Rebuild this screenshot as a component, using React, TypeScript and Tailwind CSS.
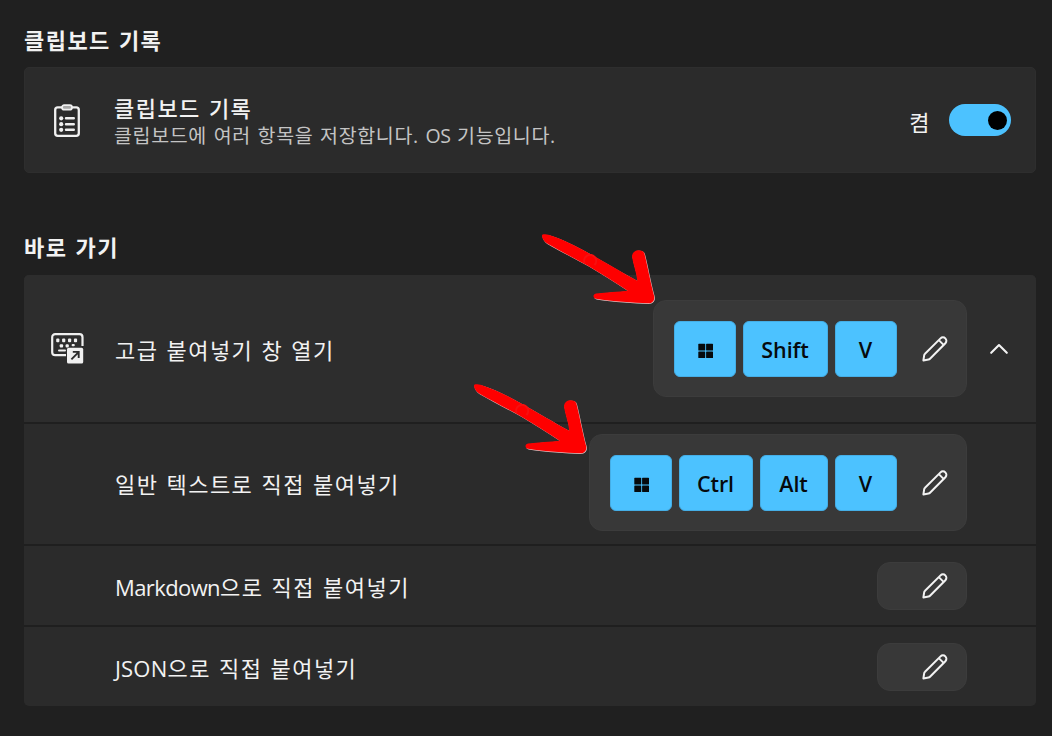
import type { ReactNode } from "react";

interface Shortcut {
  label: ReactNode;
  keys: string[];
}

const shortcuts: Shortcut[] = [
  { label: "일반 텍스트로 직접 붙여넣기", keys: ["win", "Ctrl", "Alt", "V"] },
  {
    label: (
      <>
        <span className="tracking-[-0.6px]">Markdown</span>으로 직접 붙여넣기
      </>
    ),
    keys: [],
  },
  {
    label: (
      <>
        <span className="tracking-[0.2px]">JSON</span>으로 직접 붙여넣기
      </>
    ),
    keys: [],
  },
];

const keyWidths: Record<string, string> = {
  win: "w-[62px]",
  Shift: "w-[85px]",
  Ctrl: "w-[74px]",
  Alt: "w-[68px]",
  V: "w-[62px]",
};

const rowHeights = ["h-[122px] pb-[3px]", "h-[81px]", "h-[81px]"];

function ClipboardIcon() {
  return (
    <svg width="26" height="34" viewBox="0 0 26 34" fill="none" stroke="#f0f0f0">
      <rect x="1.2" y="3.3" width="23.6" height="28.5" rx="2.6" strokeWidth="2.3" />
      <rect x="8" y="1.2" width="10" height="4.4" rx="2.2" fill="#a8a8a8" strokeWidth="1.8" />
      <g strokeWidth="2.4" strokeLinecap="round">
        <path d="M12 14.3h7.8M12 20.2h7.8M12 25.8h7.8" />
      </g>
      <g fill="#f0f0f0" stroke="none">
        <circle cx="7.2" cy="14.3" r="2.1" />
        <circle cx="7.2" cy="20.2" r="2.1" />
        <circle cx="7.2" cy="25.8" r="2.1" />
      </g>
    </svg>
  );
}

function KeyboardIcon() {
  return (
    <svg width="33" height="31" viewBox="0 0 33 31" fill="none">
      <path
        d="M15 22.2H4.2a3 3 0 0 1-3-3V4.2a3 3 0 0 1 3-3h24.3a3 3 0 0 1 3 3V13"
        stroke="#f0f0f0"
        strokeWidth="2.2"
      />
      <g fill="#f0f0f0">
        <rect x="5.2" y="5.6" width="3.2" height="3.6" rx="1" />
        <rect x="11.1" y="5.6" width="3.2" height="3.6" rx="1" />
        <rect x="17" y="5.6" width="3.2" height="3.6" rx="1" />
        <rect x="22.9" y="5.6" width="3.2" height="3.6" rx="1" />
        <rect x="8.7" y="11.3" width="3.4" height="3.2" rx="1" />
        <rect x="14.6" y="11.3" width="3.2" height="3.2" rx="1" />
        <rect x="20.6" y="11.1" width="3.2" height="2.2" rx="1" />
        <rect x="7" y="16.4" width="8" height="2" rx="1" />
        <rect x="16" y="14.8" width="16.2" height="15.8" rx="1.6" />
      </g>
      <path d="M20.4 26.4l7.2-7.2M21.8 18.9h5.9v6" stroke="#2d2d2d" strokeWidth="1.9" />
    </svg>
  );
}

function PencilIcon() {
  return (
    <svg
      width="28"
      height="28"
      viewBox="0 0 28 28"
      fill="none"
      stroke="#f2f2f2"
      strokeWidth="2"
      strokeLinejoin="round"
    >
      <path d="M2.4 25.4l.8-5.2a2.6 2.6 0 0 1 .8-1.5L19.5 3.4a3.4 3.4 0 0 1 4.9 4.8L9 23.7a2.6 2.6 0 0 1-1.5.8z" />
      <path d="M17.8 5.1l4.8 4.8" />
    </svg>
  );
}

function ChevronUpIcon() {
  return (
    <svg width="20" height="12" viewBox="0 0 20 12" fill="none">
      <path
        d="M2.2 9.8L10 2.1l7.8 7.7"
        stroke="#f2f2f2"
        strokeWidth="2.1"
        strokeLinecap="round"
        strokeLinejoin="round"
      />
    </svg>
  );
}

function WindowsIcon() {
  return (
    <svg width="16" height="16" viewBox="0 0 16 16" fill="#060a0d">
      <rect x="0.3" y="0.8" width="6.9" height="6.7" rx="0.6" />
      <rect x="8.1" y="0.8" width="6.9" height="6.7" rx="0.6" />
      <rect x="0.3" y="8.4" width="6.9" height="6.7" rx="0.6" />
      <rect x="8.1" y="8.4" width="6.9" height="6.7" rx="0.6" />
    </svg>
  );
}

function KeyCap({ name }: { name: string }) {
  return (
    <kbd
      className={`flex h-[56px] shrink-0 items-center justify-center rounded-[6px] border border-[#45aee6] bg-[#4cc2ff] font-[inherit] text-[21.5px] font-semibold tracking-[-0.1px] text-[#060a0d] ${keyWidths[name]}`}
    >
      {name === "win" ? (
        <span className="mt-[4px] ml-[2px]">
          <WindowsIcon />
        </span>
      ) : (
        <span className="mt-[2px] mr-[1px]">{name}</span>
      )}
    </kbd>
  );
}

function ShortcutButton({ keys }: { keys: string[] }) {
  const empty = keys.length === 0;

  return (
    <button
      type="button"
      className={`flex shrink-0 items-center justify-end rounded-[13px] border border-[#3c3c3c] bg-[#383838] pr-[17px] ${
        empty ? "h-[48px] w-[90px]" : "h-[97px] pl-[20px]"
      }`}
    >
      {!empty && (
        <span className="mr-[24px] flex gap-[7px]">
          {keys.map((key) => (
            <KeyCap key={key} name={key} />
          ))}
        </span>
      )}
      <PencilIcon />
    </button>
  );
}

function Arrow({ className }: { className: string }) {
  const shape =
    "M2 3.2C2.6 1.8 6 2.4 10 3.2C22 7 35 13.5 48 20.7C64 29.6 83 41 97.3 48.7C96.4 40 93 32 92 24.7C92 16.5 103 16.8 104.3 21.3C107 31 110 49 114.3 64.7C114.5 69 112 71.3 108.3 71.3C94 71 72 69.3 56 66.8C53 66.2 52.4 62.5 56 61.6C67 60.4 78 59.6 87.7 58.7C76 51 62 42 48.3 34C34 26 19 18.5 6.7 11.3C4 9.5 1.6 6 2 3.2Z";

  return (
    <svg
      className={`pointer-events-none absolute h-[76px] w-[120px] ${className}`}
      viewBox="0 0 120 76"
      fill="none"
    >
      <path d={shape} fill="#e4c8c8" transform="translate(0.6 0.6)" />
      <path d={shape} fill="#fe0000" />
      <path d="M44.5 31a6 6 0 1 1 10 2" stroke="#f61010" strokeWidth="2" />
    </svg>
  );
}

export default function App() {
  return (
    <main
      lang="ko"
      className="relative h-[736px] w-[1052px] overflow-hidden bg-[#202020] pr-[16px] pl-[24px] font-['Open_Sans','Noto_Sans_CJK_KR',sans-serif] text-[22px] leading-[28px] tracking-[1.45px] text-[#f2f2f2] [word-spacing:1px]"
    >
      <h2 className="flex h-[67px] items-center pt-[13px] font-bold">
        클립보드 기록
      </h2>
      <section className="flex h-[106px] items-center rounded-[5px] border border-[#2e2e2e] bg-[#2b2b2b] pr-[24px] pl-[29px]">
        <span className="mt-[2px]">
          <ClipboardIcon />
        </span>
        <div className="mt-[4px] ml-[34px]">
          <p className="leading-[27px] font-medium">클립보드 기록</p>
          <p className="text-[19.5px] leading-[27px] tracking-[0.65px] text-[#c4c4c4]">
            클립보드에 여러 항목을 저장합니다.{" "}
            <span className="tracking-[-0.5px]">OS</span> 기능입니다.
          </p>
        </div>
        <span className="mt-[4px] ml-auto">켬</span>
        <button
          type="button"
          role="switch"
          aria-checked="true"
          aria-label="클립보드 기록"
          className="ml-[18px] flex h-[32px] w-[62px] items-center justify-end rounded-full bg-[#4cc2ff] pr-[4px]"
        >
          <span className="size-[19px] rounded-full bg-black" />
        </button>
      </section>

      <h2 className="flex h-[102px] items-center pt-[46px] font-bold">
        바로 가기
      </h2>
      <section className="overflow-hidden rounded-[5px] bg-[#2b2b2b]">
        <div className="flex h-[147px] items-center bg-[#2d2d2d] pr-[27px] pl-[27px]">
          <KeyboardIcon />
          <span className="mt-[2px] ml-[31px]">고급 붙여넣기 창 열기</span>
          <div className="ml-auto flex items-center">
            <ShortcutButton keys={["win", "Shift", "V"]} />
            <span className="ml-[22px]">
              <ChevronUpIcon />
            </span>
          </div>
        </div>
        {shortcuts.map((item, i) => (
          <div
            key={i}
            className={`flex items-center justify-between border-t-2 border-[#1f1f1f] pr-[69px] pl-[91px] ${rowHeights[i]}`}
          >
            <span className="mt-[2px]">{item.label}</span>
            <ShortcutButton keys={item.keys} />
          </div>
        ))}
      </section>

      <Arrow className="top-[232px] left-[540px]" />
      <Arrow className="top-[382px] left-[472px]" />
    </main>
  );
}
